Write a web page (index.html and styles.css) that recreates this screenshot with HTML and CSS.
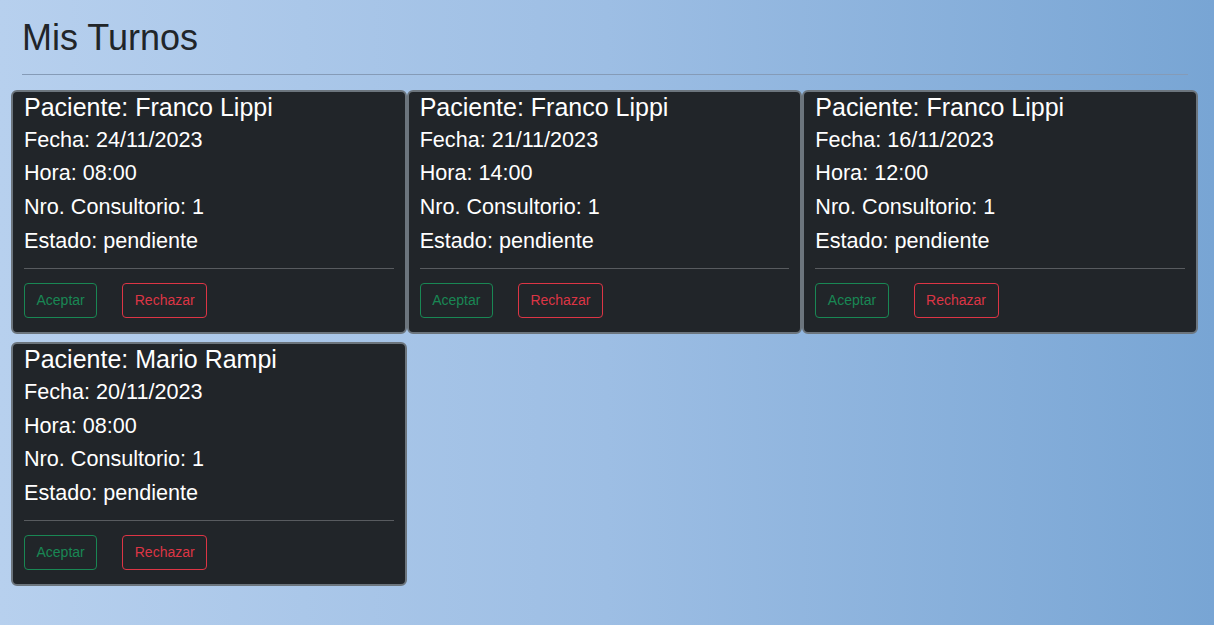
FILE: index.html
```html
<!DOCTYPE html>
<html lang="es">
<head>
<meta charset="utf-8">
<title>Mis Turnos</title>
<link rel="stylesheet" href="styles.css">
</head>
<body>
<main class="page">
  <header class="page-head">
    <h1 class="title">Mis Turnos</h1>
    <hr class="title-rule">
  </header>
  <section class="cards">
    <article class="card">
      <h4 class="patient">Paciente: Franco Lippi</h4>
      <p class="info">Fecha: 24/11/2023</p>
      <p class="info">Hora: 08:00</p>
      <p class="info">Nro. Consultorio: 1</p>
      <p class="info">Estado: pendiente</p>
      <hr class="card-rule">
      <div class="actions">
        <button class="btn btn-ok">Aceptar</button>
        <button class="btn btn-no">Rechazar</button>
      </div>
    </article>
    <article class="card">
      <h4 class="patient">Paciente: Franco Lippi</h4>
      <p class="info">Fecha: 21/11/2023</p>
      <p class="info">Hora: 14:00</p>
      <p class="info">Nro. Consultorio: 1</p>
      <p class="info">Estado: pendiente</p>
      <hr class="card-rule">
      <div class="actions">
        <button class="btn btn-ok">Aceptar</button>
        <button class="btn btn-no">Rechazar</button>
      </div>
    </article>
    <article class="card">
      <h4 class="patient">Paciente: Franco Lippi</h4>
      <p class="info">Fecha: 16/11/2023</p>
      <p class="info">Hora: 12:00</p>
      <p class="info">Nro. Consultorio: 1</p>
      <p class="info">Estado: pendiente</p>
      <hr class="card-rule">
      <div class="actions">
        <button class="btn btn-ok">Aceptar</button>
        <button class="btn btn-no">Rechazar</button>
      </div>
    </article>
    <article class="card">
      <h4 class="patient">Paciente: Mario Rampi</h4>
      <p class="info">Fecha: 20/11/2023</p>
      <p class="info">Hora: 08:00</p>
      <p class="info">Nro. Consultorio: 1</p>
      <p class="info">Estado: pendiente</p>
      <hr class="card-rule">
      <div class="actions">
        <button class="btn btn-ok">Aceptar</button>
        <button class="btn btn-no">Rechazar</button>
      </div>
    </article>
  </section>
</main>
</body>
</html>
```
FILE: styles.css
```css
html, body {
  margin: 0;
  padding: 0;
  height: 100%;
}
body {
  background: linear-gradient(to right, #b7d0ee 0%, #9dbee4 50%, #78a5d4 100%);
  font-family: "Liberation Sans", Arial, sans-serif;
  color: #212529;
  overflow: hidden;
}
.page {
  padding: 0 16px 0 11px;
}
.page-head {
  padding: 0 10px 0 11px;
}
.title {
  margin: 0;
  padding-top: 16.5px;
  font-size: 36px;
  font-weight: 400;
  line-height: 42px;
  color: #212529;
}
.title-rule {
  margin: 15.5px 0 14.5px;
  border: 0;
  border-top: 1px solid #859bb7;
  height: 0;
}
.cards {
  display: grid;
  grid-template-columns: repeat(3, 1fr);
  row-gap: 8px;
  column-gap: 0;
}
.card {
  background: #212529;
  border: 2px solid #6c757d;
  border-radius: 6px;
  padding: 0 11px 14.2px;
  color: #fff;
}
.patient {
  margin: 0 0 1.2px;
  font-size: 25px;
  font-weight: 400;
  line-height: 30px;
}
.info {
  margin: 0;
  font-size: 21.6px;
  line-height: 33.7px;
}
.card-rule {
  margin: 10.5px 0 14px;
  border: 0;
  border-top: 1px solid #585b5f;
  height: 0;
}
.actions {
  display: flex;
  gap: 25px;
}
.btn {
  background: transparent;
  font-family: "Liberation Sans", Arial, sans-serif;
  font-size: 14px;
  line-height: 20px;
  height: 34.5px;
  padding: 0 11.5px;
  border-radius: 4px;
  border: 1px solid;
}
.btn-ok {
  color: #198754;
  border-color: #198754;
}
.btn-no {
  color: #dc3545;
  border-color: #dc3545;
}
```
